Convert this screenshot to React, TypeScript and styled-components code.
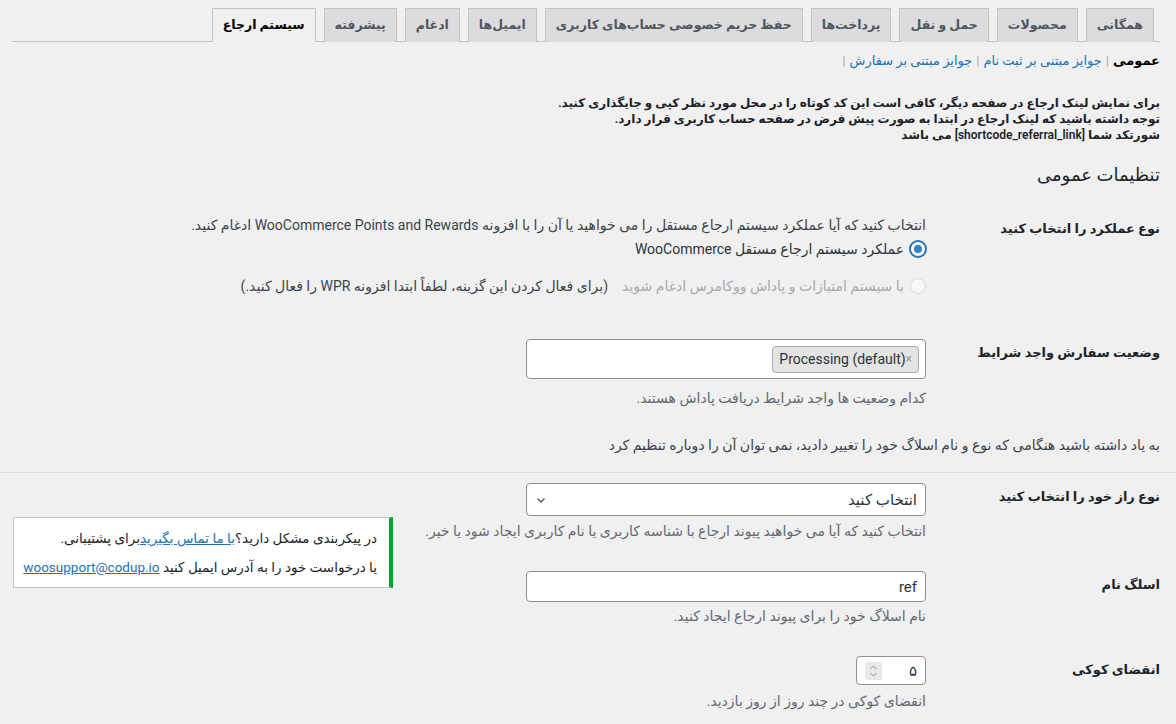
import React from 'react'
import styled, { createGlobalStyle, css } from 'styled-components'

const GlobalStyle = createGlobalStyle`
  body {
    margin: 0;
    background: #f0f0f1;
    direction: rtl;
    font-family: Roboto, "DejaVu Sans", sans-serif;
    font-size: 13px;
    color: #3c434a;
  }
`

const Page = styled.div`
  position: relative;
  padding: 8px 16px 0 12px;
`

const TabBar = styled.nav`
  display: flex;
  gap: 8px;
  padding-right: 6px;
  border-bottom: 1px solid #c3c4c7;
`

const Tab = styled.a<{ active?: boolean }>`
  display: block;
  padding: 5px 10px;
  font-size: 12.5px;
  line-height: 22px;
  font-weight: 600;
  color: #50575e;
  background: #dcdcde;
  border: 1px solid #c3c4c7;
  border-bottom: none;
  margin-bottom: -1px;
  text-decoration: none;
  white-space: nowrap;
  ${(p) =>
    p.active &&
    css`
      background: #f0f0f1;
      color: #000;
      border-bottom: 1px solid #f0f0f1;
    `}
`

const SubNav = styled.ul`
  display: flex;
  list-style: none;
  margin: 8px 0 0;
  padding: 0;
  font-size: 13px;
  line-height: 22px;
  color: #50575e;
`

const SubItem = styled.li<{ current?: boolean }>`
  a {
    color: ${(p) => (p.current ? '#000' : '#2271b1')};
    font-weight: ${(p) => (p.current ? 600 : 400)};
    text-decoration: none;
  }
`

const Sep = styled.span`
  color: #a7aaad;
  padding: 0 4px;
`

const Intro = styled.p`
  margin: 23px 0 0;
  font-size: 12px;
  line-height: 16px;
  font-weight: 600;
  color: #1d2327;
`

const Heading = styled.h2`
  margin: 19px 0 12px;
  font-size: 18px;
  line-height: 26px;
  font-weight: 400;
  color: #1d2327;
`

const Row = styled.div<{ last?: boolean }>`
  display: grid;
  grid-template-columns: 234px 1fr;
  margin-bottom: ${(p) => (p.last ? '-12px' : '0')};
`

const Label = styled.div`
  padding: 20px 0 20px 10px;
  font-size: 13px;
  line-height: 18px;
  font-weight: 600;
  color: #1d2327;
`

const Field = styled.div`
  padding: 15px 0;
`

const Desc = styled.p<{ dark?: boolean; mt?: number }>`
  margin: ${(p) => p.mt ?? 4}px 0 0;
  font-size: 14px;
  line-height: 20px;
  color: ${(p) => (p.dark ? '#3c434a' : '#646970')};
`

const RadioLine = styled.label<{ disabled?: boolean }>`
  display: flex;
  align-items: center;
  gap: 6px;
  margin: ${(p) => (p.disabled ? '17px 0 13px' : '4px 0 0')};
  font-size: 14px;
  line-height: 20px;
  color: ${(p) => (p.disabled ? '#a7aaad' : '#2c3338')};
`

const Radio = styled.span<{ checked?: boolean; disabled?: boolean }>`
  display: inline-flex;
  align-items: center;
  justify-content: center;
  width: 14px;
  height: 14px;
  border-radius: 50%;
  border: 1px solid ${(p) => (p.disabled ? '#dcdcde' : '#8c8f94')};
  background: ${(p) => (p.disabled ? '#f6f7f7' : '#fff')};
  ${(p) =>
    p.checked &&
    css`
      border-color: #2271b1;
      box-shadow: 0 0 0 1px #2271b1;
      &::after {
        content: '';
        width: 8px;
        height: 8px;
        border-radius: 50%;
        background: #3582c4;
      }
    `}
`

const Note = styled.span`
  color: #3c434a;
  margin-right: 8px;
`

const Box = styled.div<{ w?: number; h?: number }>`
  box-sizing: border-box;
  width: ${(p) => p.w ?? 400}px;
  height: ${(p) => p.h ?? 32}px;
  display: flex;
  align-items: center;
  justify-content: space-between;
  padding: 0 8px;
  background: #fff;
  border: 1px solid #8c8f94;
  border-radius: 4px;
  font-size: 15px;
  color: #2c3338;
`

const Chip = styled.span`
  display: inline-flex;
  align-items: center;
  height: 27px;
  box-sizing: border-box;
  padding: 0 6px;
  background: #e4e4e4;
  border: 1px solid #aaa;
  border-radius: 4px;
  font-size: 14px;
  color: #2c3338;
  direction: ltr;
  span {
    color: #999;
    font-size: 12px;
  }
`

const Spinner = styled.span`
  display: inline-flex;
  align-items: center;
  justify-content: center;
  width: 17px;
  height: 18px;
  background: #e8e8e9;
  border-radius: 2px;
`

const Plain = styled.p`
  margin: 12px 0 0;
  font-size: 14px;
  line-height: 20px;
  color: #3c434a;
`

const Rule = styled.hr`
  height: 0;
  border: none;
  border-top: 1px solid #dcdcde;
  margin: 17px -16px -5px -12px;
`

const Notice = styled.div`
  position: absolute;
  left: 13px;
  top: 517px;
  width: 380px;
  box-sizing: border-box;
  background: #fff;
  border: 1px solid #c3c4c7;
  border-right: 4px solid #00a32a;
  padding: 10px 12px 10px 8px;
  p {
    margin: 0;
    font-size: 13.5px;
    line-height: 20px;
    color: #1d2327;
    white-space: nowrap;
  }
  p + p {
    margin-top: 9px;
  }
  a {
    color: #2271b1;
    text-decoration: underline;
  }
`

const Chevron = () => (
  <svg width="12" height="12" viewBox="0 0 12 12">
    <path d="M2.5 4.5 6 8l3.5-3.5" fill="none" stroke="#50575e" strokeWidth="1.3" />
  </svg>
)

const SpinIcon = () => (
  <svg width="9" height="14" viewBox="0 0 9 14">
    <path d="M1.5 5 4.5 2l3 3M1.5 9l3 3 3-3" fill="none" stroke="#8c8f94" strokeWidth="1" />
  </svg>
)

const tabs = [
  'همگانی',
  'محصولات',
  'حمل و نقل',
  'پرداخت‌ها',
  'حفظ حریم خصوصی حساب‌های کاربری',
  'ایمیل‌ها',
  'ادغام',
  'پیشرفته',
  'سیستم ارجاع',
]

export default function App() {
  return (
    <Page>
      <GlobalStyle />
      <TabBar>
        {tabs.map((t, i) => (
          <Tab key={t} active={i === tabs.length - 1}>
            {t}
          </Tab>
        ))}
      </TabBar>

      <SubNav>
        <SubItem current>
          <a>عمومی</a>
          <Sep>|</Sep>
        </SubItem>
        <SubItem>
          <a>جوایز مبتنی بر ثبت نام</a>
          <Sep>|</Sep>
        </SubItem>
        <SubItem>
          <a>جوایز مبتنی بر سفارش</a>
          <Sep>|</Sep>
        </SubItem>
      </SubNav>

      <Intro>
        برای نمایش لینک ارجاع در صفحه دیگر، کافی است این کد کوتاه را در محل مورد نظر کپی و جایگذاری کنید.
        <br />
        توجه داشته باشید که لینک ارجاع در ابتدا به صورت پیش فرض در صفحه حساب کاربری قرار دارد.
        <br />
        شورتکد شما [shortcode_referral_link] می باشد
      </Intro>

      <Heading>تنظیمات عمومی</Heading>

      <Row>
        <Label>نوع عملکرد را انتخاب کنید</Label>
        <Field>
          <Desc dark mt={0}>
            انتخاب کنید که آیا عملکرد سیستم ارجاع مستقل را می خواهید یا آن را با افزونه WooCommerce Points and
            Rewards ادغام کنید.
          </Desc>
          <RadioLine>
            <Radio checked />
            عملکرد سیستم ارجاع مستقل WooCommerce
          </RadioLine>
          <RadioLine disabled>
            <Radio disabled />
            با سیستم امتیازات و پاداش ووکامرس ادغام شوید
            <Note>(برای فعال کردن این گزینه، لطفاً ابتدا افزونه WPR را فعال کنید.)</Note>
          </RadioLine>
        </Field>
      </Row>

      <Row>
        <Label>وضعیت سفارش واجد شرایط</Label>
        <Field>
          <Box h={40} style={{ padding: '0 6px' }}>
            <Chip>
              Processing (default)<span>×</span>
            </Chip>
          </Box>
          <Desc mt={9}>کدام وضعیت ها واجد شرایط دریافت پاداش هستند.</Desc>
        </Field>
      </Row>

      <Plain>به یاد داشته باشید هنگامی که نوع و نام اسلاگ خود را تغییر دادید، نمی توان آن را دوباره تنظیم کرد</Plain>
      <Rule />

      <Row>
        <Label>نوع راز خود را انتخاب کنید</Label>
        <Field>
          <Box h={33}>
            <span>انتخاب کنید</span>
            <Chevron />
          </Box>
          <Desc mt={5}>انتخاب کنید که آیا می خواهید پیوند ارجاع با شناسه کاربری یا نام کاربری ایجاد شود یا خیر.</Desc>
        </Field>
      </Row>

      <Row>
        <Label>اسلگ نام</Label>
        <Field>
          <Box h={31}>
            <span>ref</span>
          </Box>
          <Desc mt={4}>نام اسلاگ خود را برای پیوند ارجاع ایجاد کنید.</Desc>
        </Field>
      </Row>

      <Row last>
        <Label>انقضای کوکی</Label>
        <Field>
          <Box w={70} h={29}>
            <span>۵</span>
            <Spinner>
              <SpinIcon />
            </Spinner>
          </Box>
          <Desc mt={6}>انقضای کوکی در چند روز از روز بازدید.</Desc>
        </Field>
      </Row>

      <Notice>
        <p>
          در پیکربندی مشکل دارید؟<a>با ما تماس بگیرید</a>برای پشتیبانی.
        </p>
        <p>
          یا درخواست خود را به آدرس ایمیل کنید <a>woosupport@codup.io</a>
        </p>
      </Notice>
    </Page>
  )
}
